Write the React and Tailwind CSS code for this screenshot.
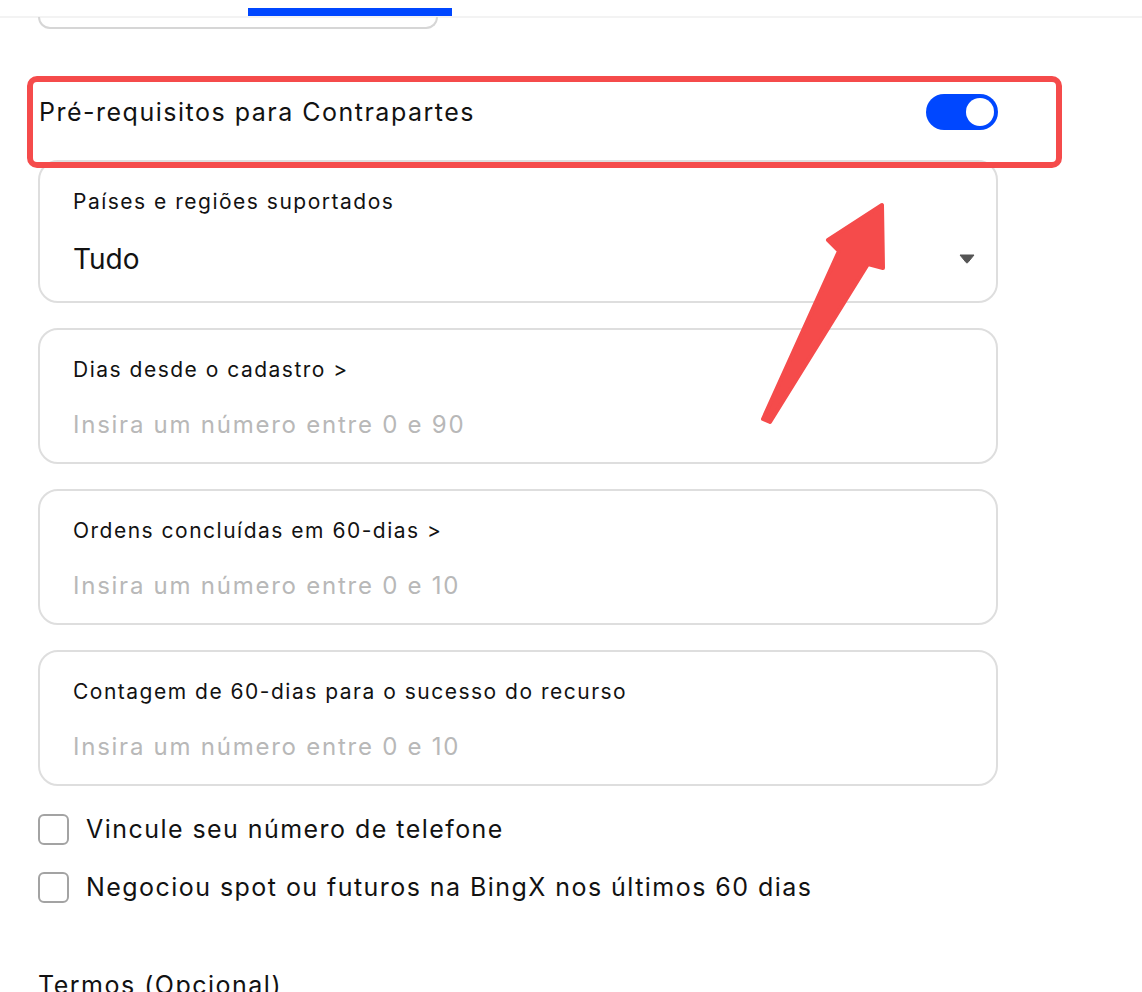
import React from "react";

function Card({ label, children, tall }) {
  return (
    <div
      className={`w-[960px] ${tall ? "h-[143px]" : "h-[136px]"} rounded-[20px] border-2 border-[#dedede] bg-white pl-[33px] pr-[20px] pt-[28px] flex flex-col`}
    >
      <div className="text-[21px] leading-[24px] text-[#121212] tracking-[1.5px]">{label}</div>
      {children}
    </div>
  );
}

function Check({ text }) {
  return (
    <div className="flex items-center h-[31px]">
      <div className="w-[31px] h-[31px] rounded-[6px] border-2 border-[#a3a3a3] bg-white" />
      <span className="ml-[17px] text-[25px] leading-[31px] text-[#121212] tracking-[1.45px]">{text}</span>
    </div>
  );
}

export default function App() {
  return (
    <div className="relative w-[1142px] h-[992px] overflow-hidden bg-white font-['Inter',sans-serif]">
      {/* tab bar */}
      <div className="h-[18px] border-b-2 border-[#f3f3f3] flex">
        <div className="ml-[248px] mt-[8px] w-[204px] h-[8px] bg-[#0047ff]" />
      </div>
      {/* previous card remainder */}
      <div className="ml-[38px] w-[400px] h-[12px] border-2 border-t-0 border-[#d6d6d6] rounded-b-[14px] -mt-[1px]" />

      <div className="ml-[38px] w-[960px] flex flex-col">
        {/* heading row */}
        <div className="mt-[65px] h-[36px] flex items-center justify-between">
          <span className="text-[25px] leading-[36px] text-[#121212] ml-[1px] tracking-[1.5px]">
            Pré-requisitos para Contrapartes
          </span>
          <div className="w-[72px] h-[36px] rounded-full bg-[#0047ff] flex items-center justify-end pr-[4px]">
            <div className="w-[28px] h-[28px] rounded-full bg-white" />
          </div>
        </div>

        <div className="mt-[30px] flex flex-col gap-[25px]">
          <Card label="Países e regiões suportados" tall>
            <div className="mt-[28px] flex items-center justify-between">
              <span className="text-[28px] leading-[34px] text-[#121212]">Tudo</span>
              <svg width="16" height="10" viewBox="0 0 16 10" className="mr-[1px]">
                <path d="M1 1 H15 L8.8 8.6 Q8 9.4 7.2 8.6 Z" fill="#555555" stroke="#555555" strokeWidth="1" strokeLinejoin="round" />
              </svg>
            </div>
          </Card>
          <Card label="Dias desde o cadastro >">
            <div className="mt-[29px] text-[24px] leading-[28px] text-[#b8b8b8] tracking-[1.75px]">Insira um número entre 0 e 90</div>
          </Card>
          <Card label="Ordens concluídas em 60-dias >">
            <div className="mt-[29px] text-[24px] leading-[28px] text-[#b8b8b8] tracking-[1.75px]">Insira um número entre 0 e 10</div>
          </Card>
          <Card label="Contagem de 60-dias para o sucesso do recurso">
            <div className="mt-[29px] text-[24px] leading-[28px] text-[#b8b8b8] tracking-[1.75px]">Insira um número entre 0 e 10</div>
          </Card>
        </div>

        <div className="mt-[28px] flex flex-col gap-[27px]">
          <Check text="Vincule seu número de telefone" />
          <Check text="Negociou spot ou futuros na BingX nos últimos 60 dias" />
        </div>

        <div className="mt-[66px] text-[25px] leading-[32px] text-[#121212] tracking-[1.5px]">Termos (Opcional)</div>
      </div>

      {/* annotation: red highlight box */}
      <div className="absolute left-[27px] top-[76px] w-[1035px] h-[92px] border-[6px] border-[#f54b4b] rounded-[10px]" />

      {/* annotation: arrow */}
      <svg className="absolute left-0 top-0" width="1142" height="992" viewBox="0 0 1142 992">
        <path
          d="M882 205 L883 268 L868 264 L770 422 L763 419 L839 251 L828 240 Z"
          fill="#f54b4b"
          stroke="#f54b4b"
          strokeWidth="4"
          strokeLinejoin="round"
        />
      </svg>
    </div>
  );
}
